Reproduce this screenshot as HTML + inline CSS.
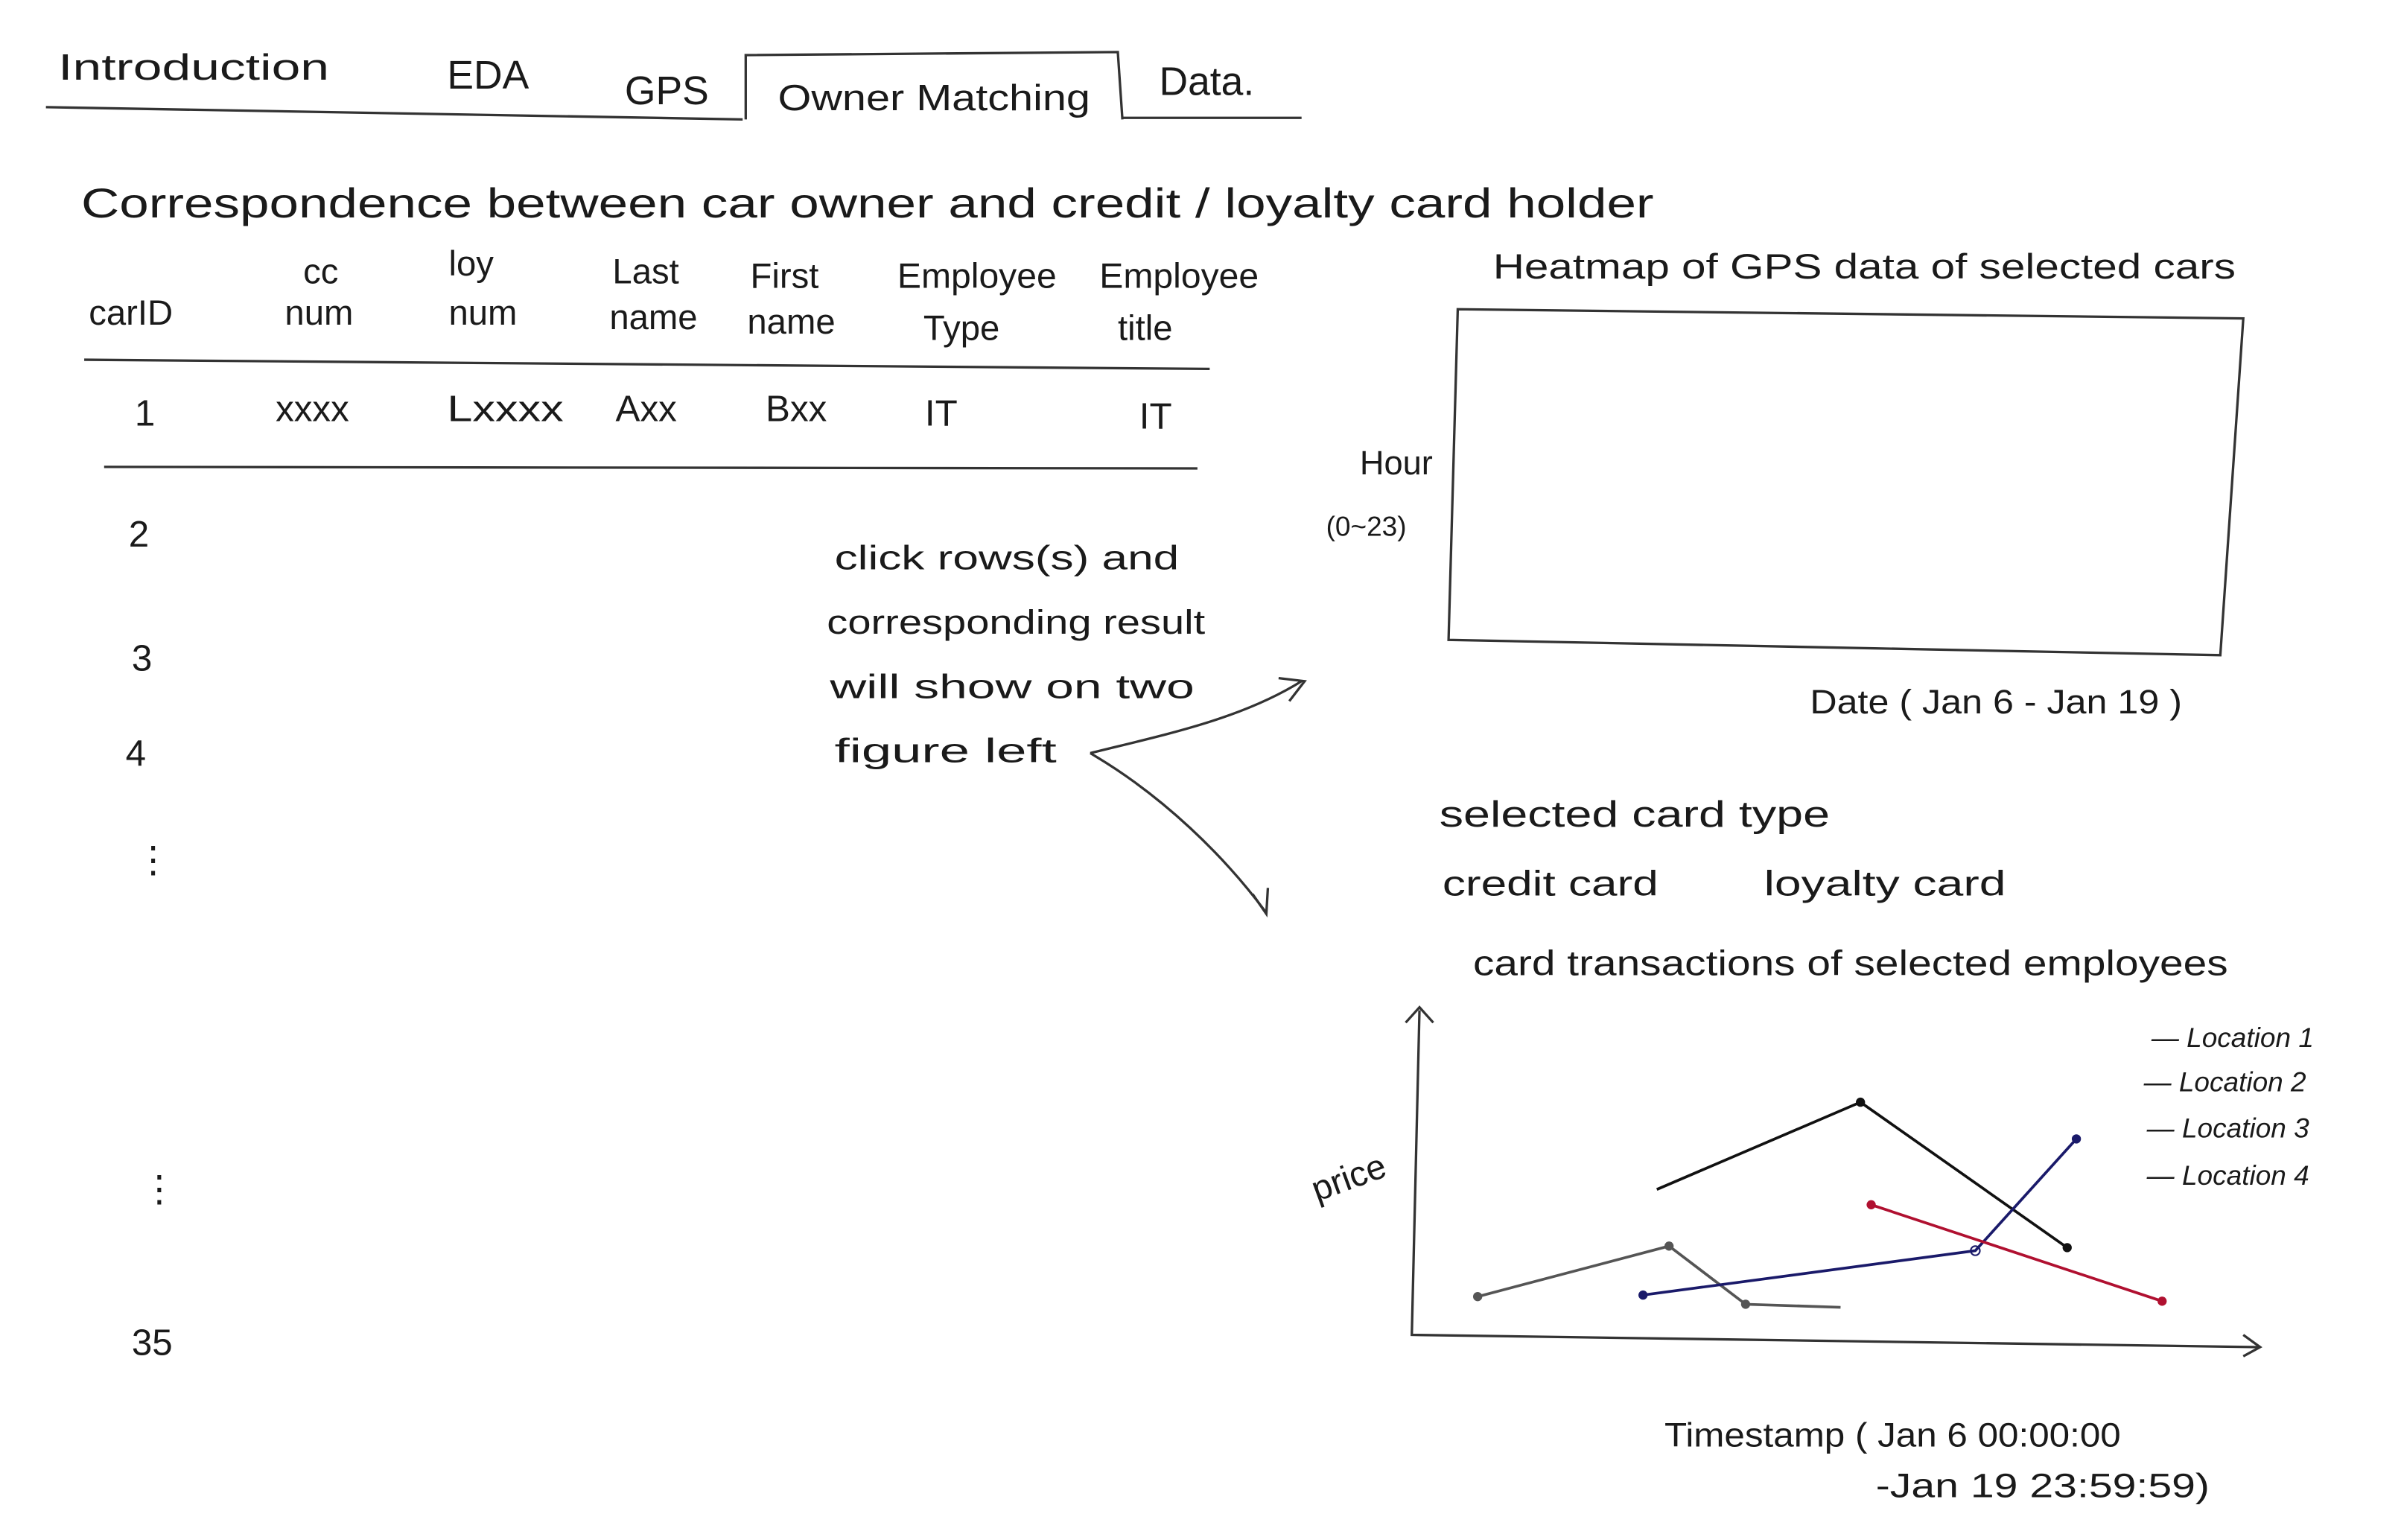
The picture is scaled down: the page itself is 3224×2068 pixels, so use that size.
<!DOCTYPE html>
<html><head><meta charset="utf-8"><style>
html,body{margin:0;padding:0;background:#fff;}
svg{display:block;}
text{font-family:"Liberation Sans",sans-serif;fill:#1a1a1a;}
</style></head><body>
<svg width="3224" height="2068" viewBox="0 0 1568 1006" preserveAspectRatio="none" xmlns="http://www.w3.org/2000/svg">
<rect width="1568" height="1006" fill="#fff"/>
<g stroke="#333" stroke-width="1.6" fill="none">
<path d="M30 70 L485 78"/>
<path d="M487 78 L487 36 L730 34 L733 78"/>
<path d="M733 77 L850 77"/>
<path d="M55 235 L790 241"/>
<path d="M68 305 L782 306"/>
<path d="M952 202 L1465 208 L1450 428 L946 418 Z"/>
<path d="M712 492 C760 480 810 470 850 445"/>
<path d="M835 443 L852 445 L842 458"/>
<path d="M712 492 C760 520 800 560 826 595"/>
<path d="M818 584 L827 597 L828 580"/>
<path d="M927 660 L922 872 L1475 880"/>
<path d="M918 668 L927 658 L936 668"/>
<path d="M1465 872 L1476 880 L1465 886"/>
</g>
<g fill="none" stroke-width="1.8">
<path d="M1082 777 L1215 720 L1350 815" stroke="#111"/>
<path d="M965 847 L1090 814 L1140 852 L1202 854" stroke="#555"/>
<path d="M1073 846 L1290 817 L1356 744" stroke="#1a1a6a"/>
<path d="M1222 787 L1412 850" stroke="#b01030"/>
</g>
<g>
<circle cx="1215" cy="720" r="3" fill="#111"/><circle cx="1350" cy="815" r="3" fill="#111"/>
<circle cx="965" cy="847" r="3" fill="#555"/><circle cx="1090" cy="814" r="3" fill="#555"/><circle cx="1140" cy="852" r="3" fill="#555"/>
<circle cx="1073" cy="846" r="3" fill="#1a1a6a"/><circle cx="1290" cy="817" r="3" fill="none" stroke="#1a1a6a"/><circle cx="1356" cy="744" r="3" fill="#1a1a6a"/>
<circle cx="1222" cy="787" r="3" fill="#b01030"/><circle cx="1412" cy="850" r="3" fill="#b01030"/>
</g>
<text x="38" y="52" font-size="24" textLength="177" lengthAdjust="spacingAndGlyphs">Introduction</text>
<text x="292" y="58" font-size="26">EDA</text>
<text x="408" y="68" font-size="26">GPS</text>
<text x="508" y="72" font-size="24" textLength="204" lengthAdjust="spacingAndGlyphs">Owner Matching</text>
<text x="757" y="62" font-size="26">Data.</text>
<text x="53" y="142" font-size="27" textLength="1027" lengthAdjust="spacingAndGlyphs">Correspondence  between  car  owner  and  credit / loyalty  card  holder</text>
<g font-size="23">
<text x="58" y="212">carID</text>
<text x="198" y="185">cc</text><text x="186" y="212">num</text>
<text x="293" y="180">loy</text><text x="293" y="212">num</text>
<text x="400" y="185">Last</text><text x="398" y="215">name</text>
<text x="490" y="188">First</text><text x="488" y="218">name</text>
<text x="586" y="188" textLength="104" lengthAdjust="spacingAndGlyphs">Employee</text><text x="603" y="222">Type</text>
<text x="718" y="188" textLength="104" lengthAdjust="spacingAndGlyphs">Employee</text><text x="730" y="222">title</text>
</g>
<g font-size="24">
<text x="88" y="278">1</text><text x="180" y="275">xxxx</text><text x="292" y="275" textLength="76" lengthAdjust="spacingAndGlyphs">Lxxxx</text>
<text x="402" y="275">Axx</text><text x="500" y="275">Bxx</text><text x="604" y="278">IT</text><text x="744" y="280">IT</text>
<text x="84" y="357">2</text><text x="86" y="438">3</text><text x="82" y="500">4</text>
<text x="88" y="570">⋮</text><text x="92" y="785">⋮</text><text x="86" y="885">35</text>
</g>
<g font-size="22" lengthAdjust="spacingAndGlyphs">
<text x="545" y="372" textLength="225" lengthAdjust="spacingAndGlyphs">click  rows(s)  and</text>
<text x="540" y="414" textLength="247" lengthAdjust="spacingAndGlyphs">corresponding  result</text>
<text x="542" y="456" textLength="238" lengthAdjust="spacingAndGlyphs">will  show  on  two</text>
<text x="545" y="498" textLength="145" lengthAdjust="spacingAndGlyphs">figure  left</text>
</g>
<text x="975" y="182" font-size="23" textLength="485" lengthAdjust="spacingAndGlyphs">Heatmap  of  GPS  data  of  selected  cars</text>
<text x="888" y="310" font-size="22">Hour</text>
<text x="866" y="350" font-size="18">(0~23)</text>
<text x="1182" y="466" font-size="22" textLength="243" lengthAdjust="spacingAndGlyphs">Date  ( Jan 6 - Jan 19 )</text>
<text x="940" y="540" font-size="24" textLength="255" lengthAdjust="spacingAndGlyphs">selected  card  type</text>
<text x="942" y="585" font-size="23" textLength="141" lengthAdjust="spacingAndGlyphs">credit card</text>
<text x="1152" y="585" font-size="23" textLength="158" lengthAdjust="spacingAndGlyphs">loyalty  card</text>
<text x="962" y="637" font-size="23" textLength="493" lengthAdjust="spacingAndGlyphs">card  transactions  of  selected  employees</text>
<text x="860" y="785" font-size="23" transform="rotate(-20 860 785)">price</text>
<g font-size="18" font-style="italic">
<text x="1405" y="684" fill="#b01030">— Location 1</text>
<text x="1400" y="713" fill="#1a1a6a">— Location 2</text>
<text x="1402" y="743" fill="#111">— Location 3</text>
<text x="1402" y="774" fill="#666">— Location 4</text>
</g>
<text x="1087" y="945" font-size="22" textLength="298" lengthAdjust="spacingAndGlyphs">Timestamp ( Jan 6 00:00:00</text>
<text x="1225" y="978" font-size="22" textLength="218" lengthAdjust="spacingAndGlyphs">-Jan 19  23:59:59)</text>
</svg>
</body></html>
